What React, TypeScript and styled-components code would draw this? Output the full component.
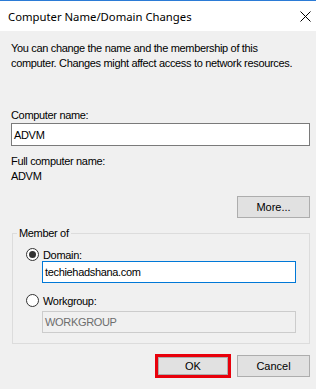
import React from 'react';
import styled, { createGlobalStyle } from 'styled-components';

const Global = createGlobalStyle`
  html, body { margin: 0; padding: 0; background: #f0f0f0; }
  * { box-sizing: border-box; }
`;

const Window = styled.div`
  width: 316px;
  height: 389px;
  background: #f0f0f0;
  border-top: 1px solid #2b7bd6;
  font-family: "Liberation Sans", Arial, sans-serif;
  font-size: 11px;
  letter-spacing: -0.33px;
  color: #000;
  overflow: hidden;
`;

const TitleBar = styled.div`
  height: 30px;
  background: #fff;
  display: flex;
  align-items: center;
  justify-content: space-between;
  padding: 0 5px 0 8px;
`;

const Title = styled.span`
  font-family: "Noto Sans", "Open Sans", sans-serif;
  font-size: 11.3px;
  letter-spacing: 0;
  color: #000;
`;

const CloseIcon = styled.svg`
  width: 11px;
  height: 11px;
  margin-top: 1px;
`;

const Body = styled.div`
  display: flex;
  flex-direction: column;
  padding: 0 6px 0 11px;
`;

const Text = styled.div<{ $top?: number; $lh?: number }>`
  line-height: ${(p) => p.$lh ?? 15}px;
  margin-top: ${(p) => p.$top ?? 0}px;
  white-space: nowrap;
`;

const TextBox = styled.div<{ $disabled?: boolean; $focus?: boolean; $h?: number }>`
  height: ${(p) => p.$h ?? 23}px;
  border: 1px solid ${(p) => (p.$focus ? '#0078d7' : p.$disabled ? '#cccccc' : '#7a7a7a')};
  background: ${(p) => (p.$disabled ? '#f0f0f0' : '#fff')};
  color: ${(p) => (p.$disabled ? '#6d6d6d' : '#000')};
  display: flex;
  align-items: center;
  padding-left: 2px;
`;

const ButtonRow = styled.div<{ $top: number }>`
  display: flex;
  justify-content: flex-end;
  align-items: center;
  gap: 6px;
  margin-top: ${(p) => p.$top}px;
`;

const Button = styled.div<{ $w?: number; $h?: number }>`
  width: ${(p) => p.$w ?? 73}px;
  height: ${(p) => p.$h ?? 22}px;
  background: #e1e1e1;
  border: 1px solid #adadad;
  display: flex;
  align-items: center;
  justify-content: center;
  letter-spacing: 0;
`;

const Highlight = styled.div`
  border: 3px solid #e8000b;
  display: flex;
`;

const Group = styled.fieldset`
  margin: 9px 0 0 1px;
  min-width: 0;
  border: 1px solid #dcdcdc;
  padding: 8px 13px 10px 13px;
  display: flex;
  flex-direction: column;
`;

const Legend = styled.legend`
  padding: 0 2px;
  margin-left: -9px;
  line-height: 13px;
`;

const RadioRow = styled.div<{ $top?: number }>`
  display: flex;
  align-items: center;
  gap: 4px;
  height: 13px;
  margin-top: ${(p) => p.$top ?? 0}px;
`;

const Radio = styled.span<{ $checked?: boolean }>`
  width: 13px;
  height: 13px;
  border-radius: 50%;
  border: 1px solid #333;
  background: #fff;
  display: flex;
  align-items: center;
  justify-content: center;
  &::after {
    content: '';
    width: 7px;
    height: 7px;
    border-radius: 50%;
    background: ${(p) => (p.$checked ? '#333' : 'transparent')};
  }
`;

const Indented = styled.div<{ $top?: number }>`
  margin-left: 16px;
  margin-top: ${(p) => p.$top ?? 0}px;
`;

export default function App() {
  return (
    <>
      <Global />
      <Window>
        <TitleBar>
          <Title>Computer Name/Domain Changes</Title>
          <CloseIcon viewBox="0 0 11 11">
            <path d="M0.5 0.5 L10.5 10.5 M10.5 0.5 L0.5 10.5" stroke="#000" strokeWidth="1" />
          </CloseIcon>
        </TitleBar>
        <Body>
          <Text $top={10}>
            You can change the name and the membership of this
            <br />
            computer. Changes might affect access to network resources.
          </Text>
          <Text $top={38} $lh={13}>Computer name:</Text>
          <TextBox style={{ marginTop: 1 }}>ADVM</TextBox>
          <Text $top={8}>Full computer name:</Text>
          <Text>ADVM</Text>
          <ButtonRow $top={12}>
            <Button>More...</Button>
          </ButtonRow>
          <Group>
            <Legend>Member of</Legend>
            <RadioRow>
              <Radio $checked />
              Domain:
            </RadioRow>
            <Indented>
              <TextBox $focus $h={22}>techiehadshana.com</TextBox>
            </Indented>
            <RadioRow $top={11}>
              <Radio />
              Workgroup:
            </RadioRow>
            <Indented $top={4}>
              <TextBox $disabled $h={22}>WORKGROUP</TextBox>
            </Indented>
          </Group>
          <ButtonRow $top={10}>
            <Highlight>
              <Button $w={70} $h={18}>OK</Button>
            </Highlight>
            <Button>Cancel</Button>
          </ButtonRow>
        </Body>
      </Window>
    </>
  );
}
